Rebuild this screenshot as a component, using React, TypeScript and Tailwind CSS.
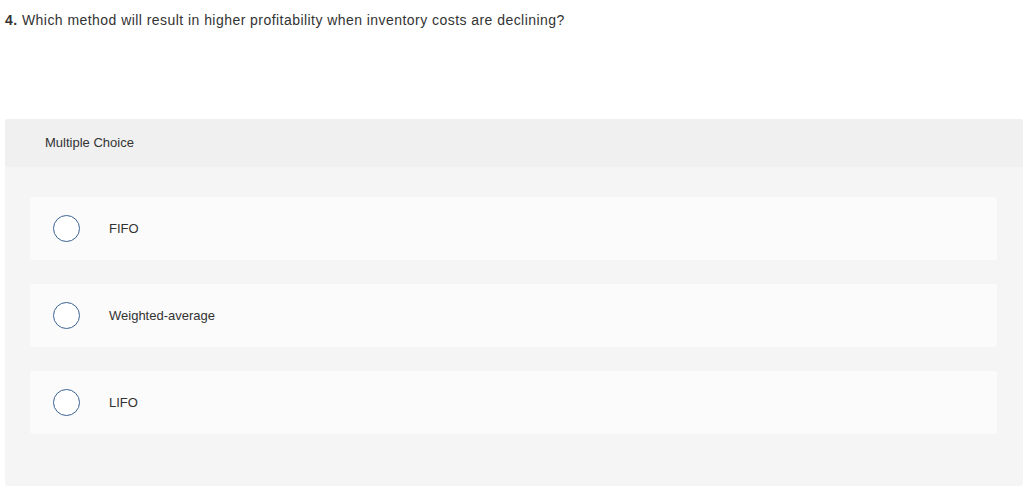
import React from 'react';

const choices = ['FIFO', 'Weighted-average', 'LIFO'];

const App: React.FC = () => {
    return (
        <div className="min-h-screen bg-white font-['Liberation_Sans',Arial,sans-serif] text-[#333]">
            <p className="px-[5px] pt-[12px] text-[14px] leading-[16px] tracking-[0.45px] text-[#333]">
                <span className="font-bold">4.</span> Which method will result in higher profitability when inventory costs are declining?
            </p>

            <div className="ml-[5px] mr-px mt-[91px] h-[367px] rounded-[3px] bg-[#f5f5f5]">
                <div className="flex h-[48px] items-center rounded-t-[3px] bg-[#f0f0f0] px-[40px] text-[13px] text-[#333]">
                    Multiple Choice
                </div>

                <div className="flex flex-col gap-[24px] pl-[25px] pr-[26px] pt-[30px]">
                    {choices.map((c) => (
                        <label
                            key={c}
                            className="flex h-[63px] items-center rounded-[3px] bg-[#fbfbfb] pl-[23px]"
                        >
                            <span className="h-[27px] w-[27px] shrink-0 rounded-full border border-[#3a6294] bg-white" />
                            <span className="ml-[29px] text-[13px] text-[#333]">{c}</span>
                        </label>
                    ))}
                </div>
            </div>
        </div>
    );
};

export default App;
